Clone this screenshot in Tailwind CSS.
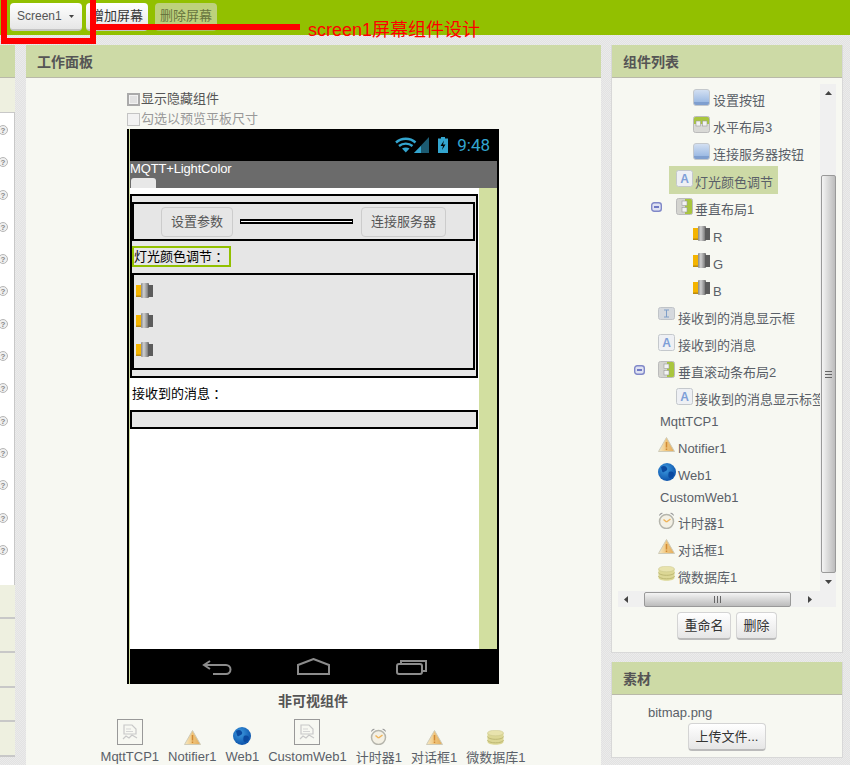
<!DOCTYPE html>
<html lang="zh-CN">
<head>
  <meta charset="UTF-8">
  <title>MQTT+LightColor</title>
  <script src="https://cdn.jsdelivr.net/npm/@tailwindcss/browser@4"></script>
</head>
<body class="bg-[#e6e6e6] font-['Liberation_Sans','Noto_Sans_CJK_SC',sans-serif] text-[13px] text-[#5a6068]">

  <!-- shared icons -->
  <svg class="absolute w-0 h-0">
    <defs>
      <linearGradient id="gBtn" x1="0" y1="0" x2="0" y2="1"><stop offset="0" stop-color="#d5e1f2"/><stop offset=".75" stop-color="#9fbce4"/><stop offset=".76" stop-color="#7f9fcf"/><stop offset="1" stop-color="#7f9fcf"/></linearGradient>
      <linearGradient id="gBar" x1="0" y1="0" x2="1" y2="0"><stop offset="0" stop-color="#888"/><stop offset=".35" stop-color="#d0d0d0"/><stop offset=".7" stop-color="#999"/><stop offset="1" stop-color="#666"/></linearGradient>
      <linearGradient id="gWarn" x1="0" y1="0" x2="1" y2="0"><stop offset="0" stop-color="#f6eac6"/><stop offset=".5" stop-color="#f0c57c"/><stop offset="1" stop-color="#e2ab5c"/></linearGradient>
      <radialGradient id="gGlobe" cx=".4" cy=".35" r=".7"><stop offset="0" stop-color="#3d9be0"/><stop offset="1" stop-color="#0a4fa8"/></radialGradient>
    </defs>
    <symbol id="iBtn" viewBox="0 0 17 17"><rect x=".5" y=".5" width="16" height="16" rx="2.5" fill="url(#gBtn)" stroke="#c4c8cc"/></symbol>
    <symbol id="iHbox" viewBox="0 0 17 17"><rect x=".5" y=".5" width="16" height="16" rx="2" fill="#d9d9d6" stroke="#bbb"/><path d="M1 2.500a1.500 1.500 0 0 1 1.500-1.500h12a1.500 1.500 0 0 1 1.500 1.500V8H1z" fill="#a9c63e"/><rect x="3" y="5" width="4.500" height="5" fill="#f2f2f2" stroke="#999" stroke-width=".6"/><rect x="9.500" y="5" width="4.500" height="5" fill="#f2f2f2" stroke="#999" stroke-width=".6"/></symbol>
    <symbol id="iVbox" viewBox="0 0 17 17"><rect x=".5" y=".5" width="16" height="16" rx="2" fill="#d4d4d0" stroke="#bbb"/><path d="M9 1h5.500A1.500 1.500 0 0 1 16 2.500v12a1.500 1.500 0 0 1-1.500 1.500H9z" fill="#a9c63e"/><rect x="6" y="3" width="5" height="4.500" fill="#f2f2f2" stroke="#999" stroke-width=".6"/><rect x="6" y="9.500" width="5" height="4.500" fill="#f2f2f2" stroke="#999" stroke-width=".6"/></symbol>
    <symbol id="iLabel" viewBox="0 0 17 17"><rect x=".5" y=".5" width="16" height="16" rx="2" fill="#eef0f4" stroke="#c4c8cc"/><text x="8.500" y="12.500" text-anchor="middle" font-size="12" font-weight="700" font-family="Liberation Sans" fill="#7f9fd8">A</text></symbol>
    <symbol id="iText" viewBox="0 0 17 13"><rect x=".5" y=".5" width="16" height="12" rx="2" fill="#d5d9de" stroke="#c0c4c8"/><path d="M6 3h5M6 10h5M8.500 3v7" stroke="#7f9fc8" stroke-width="1" fill="none"/></symbol>
    <symbol id="iSlider" viewBox="0 0 17 15"><rect x="0" y="2" width="6" height="12" fill="#f4b400"/><rect x="0" y="12.500" width="6" height="1.500" fill="#b98a10"/><rect x="5" y="0" width="8" height="15" rx="1" fill="url(#gBar)"/><rect x="12" y="2" width="5" height="12" fill="#5c5c5c"/></symbol>
    <symbol id="iWarn" viewBox="0 0 17 15"><path d="M8.500 .5 16.500 14.500H.5z" fill="url(#gWarn)" stroke="#cfcbb8"/><path d="M8.500 5v5.500M8.500 11.500v1.500" stroke="#d08a35" stroke-width="1.500"/></symbol>
    <symbol id="iGlobe" viewBox="0 0 18 18"><circle cx="9" cy="9" r="9" fill="url(#gGlobe)"/><path d="M3 4c3-2 5-1 6 1s-1 3-3 4-2-1-3-5zM11 9c3-1 5 0 5 2s-2 4-4 4-2-4-1-6z" fill="#0b4aa0"/></symbol>
    <symbol id="iClock" viewBox="0 0 17 18"><path d="M1 5a3 3 0 0 1 4-3zM16 5a3 3 0 0 0-4-3z" fill="#999"/><circle cx="8.500" cy="10.500" r="7" fill="#f3f0e4" stroke="#b5b5ac" stroke-width="1.500"/><path d="M8.500 11 5.500 8.500M8.500 11l4-3" stroke="#efb45a" stroke-width="1.500" fill="none"/></symbol>
    <symbol id="iDb" viewBox="0 0 17 15"><path d="M.5 3v9c0 1.500 3.500 2.800 8 2.800s8-1.300 8-2.800V3z" fill="#dcd795"/><ellipse cx="8.500" cy="3" rx="8" ry="2.800" fill="#e8e3ad" stroke="#c9c48a" stroke-width=".5"/><path d="M.5 6.500c0 1.500 3.500 2.800 8 2.800s8-1.300 8-2.800M.5 10c0 1.500 3.500 2.800 8 2.800s8-1.300 8-2.800" fill="none" stroke="#bdb873"/></symbol>
    <symbol id="iImg" viewBox="0 0 26 26"><rect x=".5" y=".5" width="25" height="25" fill="#f7f8f2" stroke="#999"/><path d="M7 6h8l4 4v5H7z" fill="none" stroke="#c8c8c8" stroke-width="1.200"/><path d="M6 20l3-3 3 2 3-3 5 3" fill="none" stroke="#c8c8c8" stroke-width="1.200"/><path d="M9 10h5M9 12.500h7" stroke="#d5d5d5"/></symbol>
    <symbol id="iHelp" viewBox="0 0 10 10"><circle cx="5" cy="5" r="4.500" fill="#f0f0f0" stroke="#b5b5b5"/><text x="5" y="8" text-anchor="middle" font-size="8" font-weight="700" font-family="Liberation Sans" fill="#888">?</text></symbol>
    <symbol id="iMinus" viewBox="0 0 11 10"><rect x=".7" y=".7" width="9.600" height="8.600" rx="2.500" fill="#dfe2f2" stroke="#8088c8" stroke-width="1.400"/><rect x="3" y="4.200" width="5" height="1.600" fill="#5560b8"/></symbol>
  </svg>

  <div class="relative w-[850px] h-[765px] overflow-hidden flex flex-col bg-[repeating-conic-gradient(#e2e2e2_0_25%,#ebebeb_0_50%)] bg-[length:2px_2px]">

    <!-- top bar -->
    <div class="h-[35px] shrink-0 bg-[#92c000] flex items-start pt-[3px] pl-[10px]">
      <button class="w-[72px] h-[28px] rounded-[4px] bg-linear-to-b from-white to-[#e6e6e6] border-b-2 border-[#c4c4c4] text-[12px] text-[#555] flex items-center pl-[7px] gap-[7px]">
        Screen1
        <svg class="w-[5px] h-[3px]" viewBox="0 0 5 3"><path d="M0 0h5L2.500 3z" fill="#444"/></svg>
      </button>
      <button class="ml-[4px] w-[62px] h-[28px] rounded-[4px] bg-linear-to-b from-white to-[#e6e6e6] border-b-2 border-[#c4c4c4] text-[13px] text-[#333]">增加屏幕</button>
      <button class="ml-[7px] w-[62px] h-[28px] rounded-[4px] bg-[#bdd17c] border-b-2 border-[#aabf66] text-[13px] text-[#68753f]">删除屏幕</button>
    </div>

    <div class="flex items-start pt-[10px] flex-1 min-h-0">

      <!-- left panel, mostly cut off by the window edge -->
      <div class="w-[15px] shrink-0 flex flex-col overflow-hidden">
        <div class="h-[33px] bg-[#cddaa6] border-b border-[#b9b9a9]"></div>
        <div class="h-[35px] bg-[#eef0e0] border-b border-[#c8c8c8]"></div>
        <div class="h-[472px] bg-white border-r border-[#c8c8c8] flex flex-col gap-[22.300px] pt-[12px] -ml-[2px]">
          <svg class="w-[10px] h-[10px] shrink-0"><use href="#iHelp"/></svg>
          <svg class="w-[10px] h-[10px] shrink-0"><use href="#iHelp"/></svg>
          <svg class="w-[10px] h-[10px] shrink-0"><use href="#iHelp"/></svg>
          <svg class="w-[10px] h-[10px] shrink-0"><use href="#iHelp"/></svg>
          <svg class="w-[10px] h-[10px] shrink-0"><use href="#iHelp"/></svg>
          <svg class="w-[10px] h-[10px] shrink-0"><use href="#iHelp"/></svg>
          <svg class="w-[10px] h-[10px] shrink-0"><use href="#iHelp"/></svg>
          <svg class="w-[10px] h-[10px] shrink-0"><use href="#iHelp"/></svg>
          <svg class="w-[10px] h-[10px] shrink-0"><use href="#iHelp"/></svg>
          <svg class="w-[10px] h-[10px] shrink-0"><use href="#iHelp"/></svg>
          <svg class="w-[10px] h-[10px] shrink-0"><use href="#iHelp"/></svg>
          <svg class="w-[10px] h-[10px] shrink-0"><use href="#iHelp"/></svg>
          <svg class="w-[10px] h-[10px] shrink-0"><use href="#iHelp"/></svg>
          <svg class="w-[10px] h-[10px] shrink-0"><use href="#iHelp"/></svg>
        </div>
        <div class="h-[34px] bg-[#eef0e0] border-b-2 border-[#c8c8c8]"></div>
        <div class="h-[34px] bg-[#eef0e0] border-b-2 border-[#c8c8c8]"></div>
        <div class="h-[35px] bg-[#eef0e0] border-b-2 border-[#c8c8c8]"></div>
        <div class="h-[34px] bg-[#eef0e0] border-b-2 border-[#c8c8c8]"></div>
        <div class="h-[35px] bg-[#eef0e0] border-b-2 border-[#c8c8c8]"></div>
      </div>

      <!-- viewer panel -->
      <div class="ml-[11px] w-[575px] shrink-0 h-[720px] bg-[#f7f8f2]">
        <div class="h-[33px] bg-[#cddaa6] border-b border-[#b9b9a9] pl-[11px] pt-[3px] flex items-center text-[14px] font-bold text-[#555]">工作面板</div>
        <div class="pt-[11px] pl-[101px] h-[51px]">
          <div class="h-[20px] flex items-center gap-[1px] text-[#555]">
            <span class="w-[13px] h-[13px] bg-[#e2e2e2] border-2 border-[#aaa] shadow-[inset_0_0_0_1px_#f2f2f2]"></span>显示隐藏组件
          </div>
          <div class="h-[20px] flex items-center gap-[1px] text-[#999]">
            <span class="w-[13px] h-[13px] bg-[#f2f2f2] border border-[#c4c4c4]"></span>勾选以预览平板尺寸
          </div>
        </div>

        <div class="flex flex-col items-center pr-[1px]">
          <!-- phone -->
          <div class="w-[372px] h-[555px] bg-black pl-[2px] pr-[2px] flex flex-col">
            <div class="flex-1 flex flex-col border-l border-[#d2dfa0]">
              <div class="h-[32px] shrink-0 flex items-center justify-end pr-[7px] text-[#33a5cf]">
                <svg class="w-[35px] h-[16px]" viewBox="0 0 35 16"><path d="M1 5.500c5.500-5 14-5 19.500 0M4 9c3.800-3.200 9.700-3.200 13.500 0" fill="none" stroke="#33a5cf" stroke-width="2.400"/><path d="M7 11.500c2-1.300 5.500-1.300 7.500 0L10.750 15.500z" fill="#33a5cf"/><path d="M19 16 34 0v16z" fill="#33a5cf" opacity=".55"/><path d="M19 16l7-7v7z" fill="#33a5cf"/></svg>
                <svg class="w-[10px] h-[16px] ml-[8px]" viewBox="0 0 10 16"><path d="M3 0h4v1.500h3V16H0V1.500h3z" fill="#33a5cf"/><path d="M6 3.500 2.500 9H5l-1 4 3.500-5.500H5z" fill="#000"/></svg>
                <span class="ml-[9px] text-[17px] font-['Roboto',sans-serif] leading-none">9:48</span>
              </div>
              <div class="h-[27px] shrink-0 bg-[#6b6b6b] flex flex-col">
                <div class="h-[17px] leading-[15px] text-white whitespace-nowrap tracking-[-0.15px]">MQTT+LightColor</div>
                <div class="w-[25px] h-[10px] ml-[1px] bg-[#e8e8e8] rounded-t-[3px]"></div>
              </div>
              <div class="h-[461px] shrink-0 flex">
                <div class="w-[349px] bg-white pt-[6px] text-black">
                  <div class="w-[348px] h-[184px] border-2 border-black bg-[#e6e6e6] pt-[6px]">
                    <div class="w-[343px] h-[39px] border-2 border-black flex items-center pl-[27px]">
                      <span class="w-[72px] h-[30px] rounded-[4px] border border-[#ccc] flex items-center justify-center text-[#555]">设置参数</span>
                      <span class="ml-[7px] w-[113px] h-[5px] border border-black bg-white border-y-2"></span>
                      <span class="ml-[8px] w-[85px] h-[30px] rounded-[4px] border border-[#ccc] flex items-center justify-center text-[#555]">连接服务器</span>
                    </div>
                    <div class="mt-[5px] w-[99px] h-[21px] border-2 border-[#92c000] flex items-center whitespace-nowrap">灯光颜色调节<span class="font-['Noto_Sans_CJK_TC']">：</span></div>
                    <div class="mt-[6px] w-[343px] h-[97px] border-2 border-black pt-[8px] pl-[2px] flex flex-col gap-[14.500px]">
                      <svg class="w-[17px] h-[15px] shrink-0"><use href="#iSlider"/></svg>
                      <svg class="w-[17px] h-[15px] shrink-0"><use href="#iSlider"/></svg>
                      <svg class="w-[17px] h-[15px] shrink-0"><use href="#iSlider"/></svg>
                    </div>
                  </div>
                  <div class="h-[32px] flex items-center pl-[2px]">接收到的消息<span class="font-['Noto_Sans_CJK_TC']">：</span></div>
                  <div class="w-[348px] h-[19px] border-2 border-black bg-[#e6e6e6]"></div>
                </div>
                <div class="w-[18px] bg-[#d2dfa0]"></div>
              </div>
              <div class="flex-1 flex items-center">
                <svg class="ml-[72px] w-[31px] h-[16px]" viewBox="0 0 31 16"><path d="M8 2 2 6l6 4M2 6h22a4 4 0 0 1 0 9H11" fill="none" stroke="#8c8c8c" stroke-width="2"/></svg>
                <svg class="ml-[64px] w-[33px] h-[17px]" viewBox="0 0 33 17"><path d="M1 7 16.500 1 32 7v9H1z" fill="none" stroke="#8c8c8c" stroke-width="2"/></svg>
                <svg class="ml-[66px] w-[31px] h-[16px]" viewBox="0 0 31 16"><path d="M5 5V2h25v10h-3" fill="none" stroke="#8c8c8c" stroke-width="2"/><rect x="1" y="5" width="25" height="10" rx="2" fill="none" stroke="#8c8c8c" stroke-width="2"/></svg>
              </div>
            </div>
          </div>

          <div class="h-[35px] flex items-center text-[14px] font-bold text-[#555]">非可视组件</div>
          <!-- non visible components -->
          <div class="flex items-start gap-[9px] whitespace-nowrap h-[46px]">
            <div class="flex flex-col items-center"><div class="h-[26px] flex items-end"><svg class="w-[26px] h-[26px]"><use href="#iImg"/></svg></div><span class="leading-[24px]">MqttTCP1</span></div>
            <div class="flex flex-col items-center"><div class="h-[26px] flex items-end"><svg class="w-[17px] h-[15px]"><use href="#iWarn"/></svg></div><span class="leading-[24px]">Notifier1</span></div>
            <div class="flex flex-col items-center"><div class="h-[26px] flex items-end"><svg class="w-[18px] h-[18px]"><use href="#iGlobe"/></svg></div><span class="leading-[24px]">Web1</span></div>
            <div class="flex flex-col items-center"><div class="h-[26px] flex items-end"><svg class="w-[26px] h-[26px]"><use href="#iImg"/></svg></div><span class="leading-[24px]">CustomWeb1</span></div>
            <div class="flex flex-col items-center"><div class="h-[26px] flex items-end"><svg class="w-[17px] h-[18px]"><use href="#iClock"/></svg></div><span class="leading-[26px]">计时器1</span></div>
            <div class="flex flex-col items-center"><div class="h-[26px] flex items-end"><svg class="w-[17px] h-[15px]"><use href="#iWarn"/></svg></div><span class="leading-[26px]">对话框1</span></div>
            <div class="flex flex-col items-center"><div class="h-[26px] flex items-end"><svg class="w-[17px] h-[15px]"><use href="#iDb"/></svg></div><span class="leading-[26px]">微数据库1</span></div>
          </div>
        </div>
      </div>

      <!-- right column -->
      <div class="ml-[10px] w-[232px] shrink-0 flex flex-col gap-[9px]">

        <!-- component tree -->
        <div class="h-[608px] bg-[#f7f8f2] border-x border-b border-[#d8d8d8]">
          <div class="h-[33px] bg-[#cddaa6] border-b border-[#b9b9a9] pl-[11px] pt-[3px] flex items-center text-[14px] font-bold text-[#555]">组件列表</div>
          <div class="mx-[6px] mt-[6px] h-[523px] w-[218px] flex flex-col">
            <div class="h-[507px] flex">
              <div class="w-[202px] overflow-hidden whitespace-nowrap pt-[1px]">
                <div class="h-[27px] flex items-start pl-[75px]"><svg class="w-[17px] h-[17px] mt-[4px] mr-[3px]"><use href="#iBtn"/></svg><span class="mt-[8px] leading-[16px]">设置按钮</span></div>
                <div class="h-[27px] flex items-start pl-[75px]"><svg class="w-[17px] h-[17px] mt-[4px] mr-[3px]"><use href="#iHbox"/></svg><span class="mt-[8px] leading-[16px]">水平布局3</span></div>
                <div class="h-[27px] flex items-start pl-[75px]"><svg class="w-[17px] h-[17px] mt-[4px] mr-[3px]"><use href="#iBtn"/></svg><span class="mt-[8px] leading-[16px]">连接服务器按钮</span></div>
                <div class="h-[28px] flex items-start pl-[51px]"><div class="h-[28px] bg-[#cddaa6] flex items-start pl-[7px] pr-[5px]"><svg class="w-[17px] h-[17px] mt-[4px] mr-[2px]"><use href="#iLabel"/></svg><span class="mt-[9px] leading-[16px]">灯光颜色调节</span></div></div>
                <div class="h-[28px] flex items-start pl-[33px]"><svg class="w-[11px] h-[10px] mt-[8px] mr-[14px]"><use href="#iMinus"/></svg><svg class="w-[17px] h-[17px] mt-[4px] mr-[2px]"><use href="#iVbox"/></svg><span class="mt-[8px] leading-[16px]">垂直布局1</span></div>
                <div class="h-[27px] flex items-start pl-[75px]"><svg class="w-[17px] h-[15px] mt-[4px] mr-[3px]"><use href="#iSlider"/></svg><span class="mt-[8px] leading-[16px]">R</span></div>
                <div class="h-[27px] flex items-start pl-[75px]"><svg class="w-[17px] h-[15px] mt-[4px] mr-[3px]"><use href="#iSlider"/></svg><span class="mt-[8px] leading-[16px]">G</span></div>
                <div class="h-[27px] flex items-start pl-[75px]"><svg class="w-[17px] h-[15px] mt-[4px] mr-[3px]"><use href="#iSlider"/></svg><span class="mt-[8px] leading-[16px]">B</span></div>
                <div class="h-[27px] flex items-start pl-[40px]"><svg class="w-[17px] h-[13px] mt-[4px] mr-[3px]"><use href="#iText"/></svg><span class="mt-[8px] leading-[16px]">接收到的消息显示框</span></div>
                <div class="h-[27px] flex items-start pl-[40px]"><svg class="w-[17px] h-[17px] mt-[4px] mr-[3px]"><use href="#iLabel"/></svg><span class="mt-[8px] leading-[16px]">接收到的消息</span></div>
                <div class="h-[27px] flex items-start pl-[16px]"><svg class="w-[11px] h-[10px] mt-[8px] mr-[13px]"><use href="#iMinus"/></svg><svg class="w-[17px] h-[17px] mt-[4px] mr-[3px]"><use href="#iVbox"/></svg><span class="mt-[8px] leading-[16px]">垂直滚动条布局2</span></div>
                <div class="h-[27px] flex items-start pl-[58px]"><svg class="w-[17px] h-[17px] mt-[4px] mr-[2px] shrink-0"><use href="#iLabel"/></svg><span class="mt-[8px] leading-[16px]">接收到的消息显示标签</span></div>
                <div class="h-[22px] flex items-center pl-[42px]">MqttTCP1</div>
                <div class="h-[27px] flex items-start pl-[40px]"><svg class="w-[17px] h-[15px] mt-[4px] mr-[3px]"><use href="#iWarn"/></svg><span class="mt-[8px] leading-[16px]">Notifier1</span></div>
                <div class="h-[27px] flex items-start pl-[40px]"><svg class="w-[18px] h-[18px] mt-[3px] mr-[2px]"><use href="#iGlobe"/></svg><span class="mt-[8px] leading-[16px]">Web1</span></div>
                <div class="h-[21px] flex items-center pl-[42px]">CustomWeb1</div>
                <div class="h-[27px] flex items-start pl-[40px]"><svg class="w-[17px] h-[18px] mt-[3px] mr-[3px]"><use href="#iClock"/></svg><span class="mt-[8px] leading-[16px]">计时器1</span></div>
                <div class="h-[27px] flex items-start pl-[40px]"><svg class="w-[17px] h-[15px] mt-[4px] mr-[3px]"><use href="#iWarn"/></svg><span class="mt-[8px] leading-[16px]">对话框1</span></div>
                <div class="h-[27px] flex items-start pl-[40px]"><svg class="w-[17px] h-[15px] mt-[4px] mr-[3px]"><use href="#iDb"/></svg><span class="mt-[8px] leading-[16px]">微数据库1</span></div>
              </div>
              <!-- vertical scrollbar -->
              <div class="w-[16px] bg-[#f0f0f0] flex flex-col items-center">
                <svg class="w-[7px] h-[4px] mt-[7px] mb-[5px]" viewBox="0 0 7 4"><path d="M3.500 0 7 4H0z" fill="#444"/></svg>
                <div class="h-[75px] shrink-0"></div>
                <div class="w-[15px] h-[398px] shrink-0 rounded-[2px] border border-[#999] bg-linear-to-r from-[#f4f4f4] to-[#bcbcbc] flex items-center justify-center">
                  <svg class="w-[7px] h-[7px]" viewBox="0 0 7 7"><path d="M0 .5h7M0 3.500h7M0 6.500h7" stroke="#666"/></svg>
                </div>
                <svg class="w-[7px] h-[4px] mt-[7px]" viewBox="0 0 7 4"><path d="M0 0h7L3.500 4z" fill="#444"/></svg>
              </div>
            </div>
            <!-- horizontal scrollbar -->
            <div class="h-[16px] flex">
              <div class="w-[202px] bg-[#f0f0f0] flex items-center pl-[6px]">
                <svg class="w-[4px] h-[7px]" viewBox="0 0 4 7"><path d="M4 0v7L0 3.500z" fill="#444"/></svg>
                <div class="ml-[16px] w-[147px] h-[15px] rounded-[2px] border border-[#999] bg-linear-to-b from-[#f4f4f4] to-[#bcbcbc] flex items-center justify-center">
                  <svg class="w-[7px] h-[7px]" viewBox="0 0 7 7"><path d="M.5 0v7M3.500 0v7M6.500 0v7" stroke="#666"/></svg>
                </div>
                <svg class="ml-[17px] w-[4px] h-[7px]" viewBox="0 0 4 7"><path d="M0 0v7l4-3.500z" fill="#444"/></svg>
              </div>
              <div class="w-[16px] bg-[#f0f0f0]"></div>
            </div>
          </div>
          <div class="mt-[5px] flex pl-[65px] gap-[5px] text-[#333]">
            <button class="w-[54px] h-[28px] rounded-[4px] bg-linear-to-b from-white to-[#e6e6e6] border border-[#d4d4d4] border-b-2 border-b-[#bbb]">重命名</button>
            <button class="w-[41px] h-[28px] rounded-[4px] bg-linear-to-b from-white to-[#e6e6e6] border border-[#d4d4d4] border-b-2 border-b-[#bbb]">删除</button>
          </div>
        </div>

        <!-- assets -->
        <div class="h-[96px] bg-[#f7f8f2] border-x border-b border-[#d8d8d8]">
          <div class="h-[33px] bg-[#cddaa6] border-b border-[#b9b9a9] pl-[11px] pt-[3px] flex items-center text-[14px] font-bold text-[#555]">素材</div>
          <div class="h-[18px] mt-[9px] pl-[36px] leading-[18px]">bitmap.png</div>
          <button class="mt-[1px] ml-[76px] w-[78px] h-[28px] rounded-[4px] bg-linear-to-b from-white to-[#e6e6e6] border border-[#d4d4d4] border-b-2 border-b-[#bbb] text-[#333]">上传文件...</button>
        </div>
      </div>
    </div>

    <!-- red annotation drawn over the screenshot -->
    <div class="absolute left-[1px] -top-[6px] w-[95px] h-[50px] border-[6px] border-[#ff0000]"></div>
    <div class="absolute left-[96px] top-[24px] w-[204px] h-[6px] bg-[#ff0000]"></div>
    <div class="absolute left-[308px] top-[19px] text-[18px] leading-[22px] text-[#ff0000] whitespace-nowrap">screen1屏幕组件设计</div>
  </div>
</body>
</html>
